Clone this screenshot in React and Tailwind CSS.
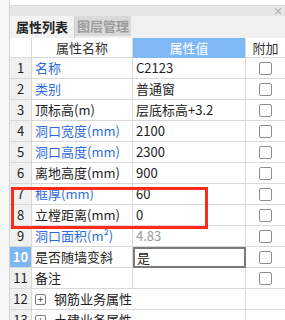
import React from "react";

const rows = [
  { name: "名称", value: "C2123", blue: true },
  { name: "类别", value: "普通窗", blue: true },
  { name: "顶标高(m)", value: "层底标高+3.2" },
  { name: "洞口宽度(mm)", value: "2100", blue: true },
  { name: "洞口高度(mm)", value: "2300", blue: true },
  { name: "离地高度(mm)", value: "900" },
  { name: "框厚(mm)", value: "60", blue: true },
  { name: "立樘距离(mm)", value: "0" },
  { name: "洞口面积(m²)", value: "4.83", blue: true, muted: true },
  { name: "是否随墙变斜", value: "是", active: true },
  { name: "备注", value: "" },
];

const groups = ["钢筋业务属性", "土建业务属性"];

function Checkbox() {
  return <div className="w-[13px] h-[13px] rounded-[2px] border border-[#8c8c8c] bg-white" />;
}

function PlusBox() {
  return (
    <span className="w-[11px] h-[11px] border border-[#7a7a7a] rounded-[2px] flex items-center justify-center text-[10px] leading-none text-[#444]">
      +
    </span>
  );
}

export default function App() {
  return (
    <div
      className="w-[285px] h-[320px] overflow-hidden bg-white flex text-[13px] text-[#222]"
      style={{ fontFamily: '"Noto Sans CJK SC", "Noto Sans", sans-serif' }}
    >
      {/* left strip */}
      <div className="w-[10px] shrink-0 bg-[#f7f7f7] border-r border-[#d4d4d4]" />

      <div className="flex-1 flex flex-col">
        <div className="h-[7px] border-t-[5px] border-white border-b border-b-[#dcdcdc] bg-white" />
        <div className="h-[10px] bg-[#e6e6e6] flex justify-end items-center pr-[2px]">
          <span className="text-[10px] leading-none text-[#9a9a9a]">×</span>
        </div>

        {/* tabs */}
        <div className="h-[23px] bg-[#f0f0f0] flex items-end">
          <div className="h-[22px] w-[65px] bg-[#f2f2f2] border-r border-[#cfcfcf] flex items-center justify-center font-semibold text-[#222]">
            属性列表
          </div>
          <div className="h-[20px] mb-[2px] w-[56px] bg-[#d9d9d9] flex items-center justify-center font-semibold text-[#9c9c9c]">
            图层管理
          </div>
        </div>

        <div className="relative flex-1">
          {/* header */}
          <div className="flex h-[20px]">
            <div className="w-[22px] border-r border-b border-[#d9d9d9]" />
            <div className="w-[101px] border-r border-b border-[#d9d9d9] flex items-center justify-center text-[#333]">
              属性名称
            </div>
            <div className="w-[113px] bg-[#7fb8f5] border-r border-[#d9d9d9] flex items-center justify-center text-white">
              属性值
            </div>
            <div className="w-[39px] border-b border-[#d9d9d9] flex items-center justify-center text-[#333]">
              附加
            </div>
          </div>

          {rows.map((r, i) => (
            <div key={i} className="flex h-[21px]">
              <div
                className={
                  r.active
                    ? "w-[22px] bg-[#7db7f4] border-r border-b border-[#d9d9d9] flex items-center justify-center text-white font-bold"
                    : "w-[22px] bg-[#f0f0f0] border-r border-b border-[#d9d9d9] flex items-center justify-center"
                }
              >
                {i + 1}
              </div>
              <div
                className={
                  r.blue
                    ? "w-[101px] border-r border-b border-[#d9d9d9] flex items-center pl-[3px] text-[#2f6be0] whitespace-nowrap"
                    : "w-[101px] border-r border-b border-[#d9d9d9] flex items-center pl-[3px] whitespace-nowrap"
                }
              >
                {r.name}
              </div>
              <div
                className={
                  r.active
                    ? "w-[113px] border-2 border-[#7a7a7a] flex items-center pl-[2px]"
                    : r.muted
                    ? "w-[113px] border-r border-b border-[#d9d9d9] flex items-center pl-[3px] text-[#9a9a9a]"
                    : "w-[113px] border-r border-b border-[#d9d9d9] flex items-center pl-[3px]"
                }
              >
                {r.value}
              </div>
              <div className="w-[39px] border-b border-[#d9d9d9] flex items-center justify-center">
                <Checkbox />
              </div>
            </div>
          ))}

          {groups.map((g, i) => (
            <div key={g} className="flex h-[21px]">
              <div className="w-[22px] bg-[#f0f0f0] border-r border-b border-[#d9d9d9] flex items-center justify-center">
                {rows.length + i + 1}
              </div>
              <div className="w-[214px] border-r border-b border-[#d9d9d9] flex items-center gap-[8px] pl-[3px]">
                <PlusBox />
                <span>{g}</span>
              </div>
              <div className="w-[39px] border-b border-[#d9d9d9]" />
            </div>
          ))}

          {/* red highlight */}
          <div className="absolute left-[1px] top-[149px] w-[197px] h-[42px] border-[3px] border-[#ff2a1a]" />
        </div>
      </div>
    </div>
  );
}
